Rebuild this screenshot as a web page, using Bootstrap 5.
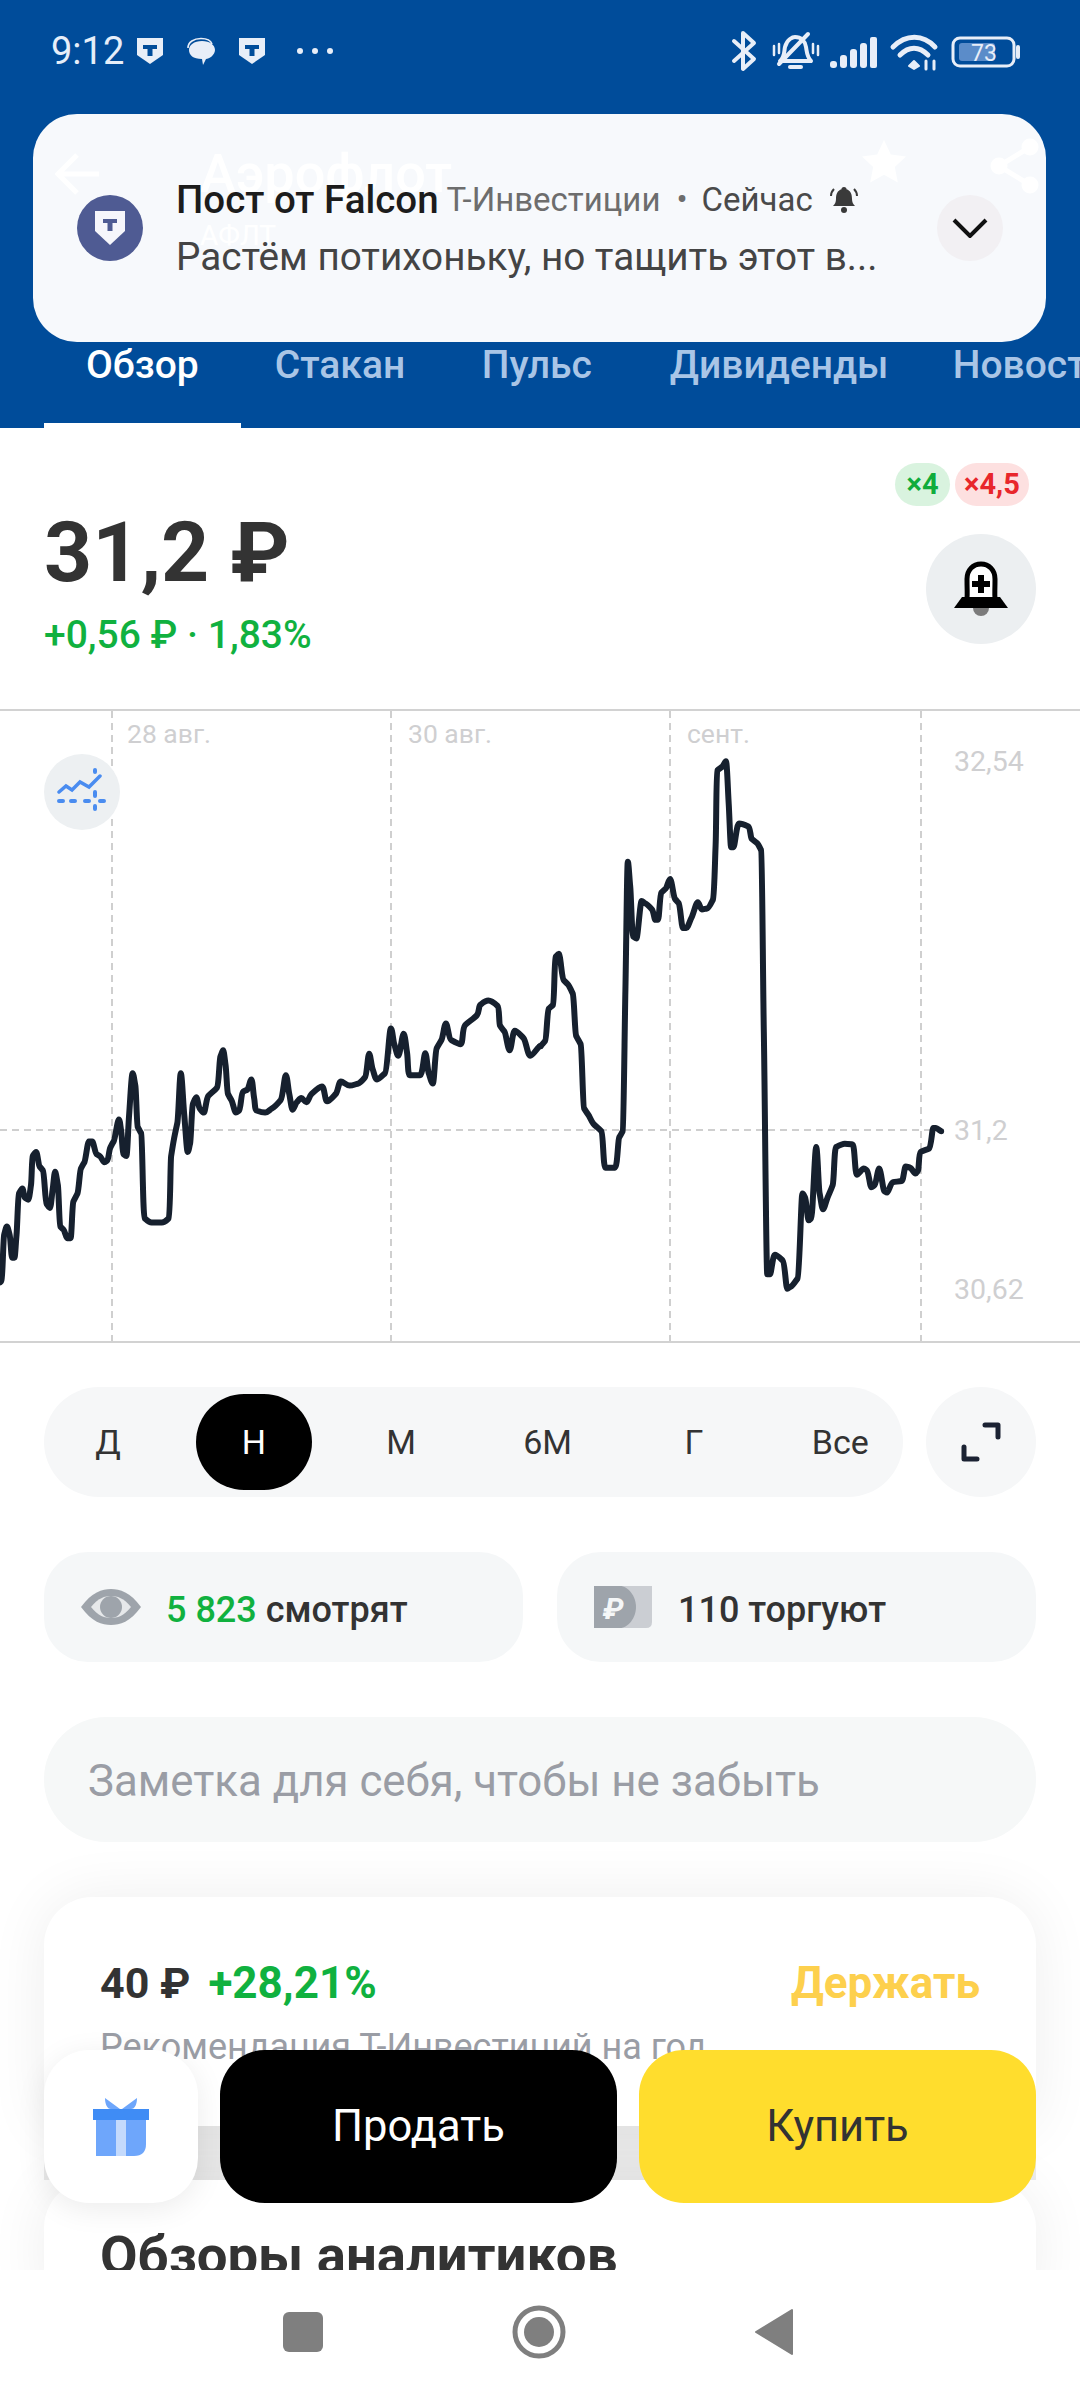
<!DOCTYPE html>
<html lang="ru">
<head>
<meta charset="utf-8">
<title>Аэрофлот</title>
<link href="https://cdn.jsdelivr.net/npm/bootstrap@5.3.0/dist/css/bootstrap.min.css" rel="stylesheet">
<style>
html,body{margin:0;background:#fff}
body{font-family:Roboto,"Liberation Sans",sans-serif;color:#333}
.phone{width:1080px;height:2400px;overflow:hidden}
.topbar{background:#004c9a;height:428px;color:#fff}
.statusline{height:100px;padding:2px 58px 0 51px;color:#e6eef9}
.clock{font-size:38px;line-height:1;margin-right:13px}
.titlerow{height:220px;padding:44px 40px 0 55px}
.backmark{width:46px;margin-right:99px}
.ghosttitle{font-size:54px;font-weight:500;line-height:60px}
.ghostsub{font-size:28px;line-height:36px;margin-top:14px}
.starmark{margin:-6px 82px 0 0}
.sharemark{margin-top:-6px}
.tabrow{height:108px;padding-left:44px;flex-wrap:nowrap;overflow:hidden}
.tabitem{font-size:39px;font-weight:500;line-height:90px;height:108px;padding:0 42px;color:#a9c5e6;white-space:nowrap;border-bottom:5px solid transparent}
.tabitem.on{color:#fff;border-bottom-color:#fff}
.tabitem:nth-child(1){width:198px}
.tabitem:nth-child(2){padding:0 0 0 34px;width:163px}
.tabitem:nth-child(3){padding:0 0 0 78px;width:187px}
.tabitem:nth-child(4){padding:0 0 0 79px;width:295px}
.tabitem:nth-child(5){padding:0 0 0 67px}
.notice{left:33px;top:114px;width:1013px;height:228px;border-radius:44px;background:rgba(255,255,255,.97);padding:0 43px 0 44px;color:#222}
.noticeava{width:66px;height:66px;background:#4f5b93;margin-right:33px;flex:none}
.noticetop{line-height:44px;height:44px;margin-bottom:13px;white-space:nowrap}
.noticename{font-size:38.500px;font-weight:500;color:#1c1c1c}
.noticeapp{font-size:33px;color:#6d6d6d;margin-left:8px}
.noticedot{font-size:33px;color:#6d6d6d;margin:0 14px 0 16px}
.noticetime{font-size:33px;color:#4a4a4a}
.noticebody{font-size:38.700px;line-height:44px;color:#444;white-space:nowrap}
.noticedown{width:66px;height:66px;background:#f2f0f3;flex:none}
.pricezone{height:281px;padding:77px 44px 0}
.priceval{font-size:84px;font-weight:700;line-height:96px;color:#333}
.pricechg{font-size:39px;font-weight:500;line-height:44px;color:#10b13f;margin-top:12px}
.marginchip{font-size:29px;font-weight:700;height:43px;border-radius:22px;line-height:43px;text-align:center}
.chipgreen{width:55px;background:#d9f3df;color:#10ac3c;margin-right:5px}
.chipred{width:74px;background:#fde0e0;color:#e8262b}
.chips{top:35px;right:51px}
.bellbtn{width:110px;height:110px;background:#eceff1;top:106px;right:44px}
.chartzone{height:634px;border-top:2px solid #d2d2d2;border-bottom:2px solid #d2d2d2}
.chartzone svg{display:block}
.axis{font-family:Roboto,"Liberation Sans",sans-serif;font-size:26.500px;fill:#cfcfd1}
.axisval{font-size:28.500px}
.modebtn{left:44px;top:43px;width:76px;height:76px;background:#edf0f2}
.periodrow{margin:44px 44px 0;gap:0}
.periodpill{width:859px;height:110px;background:#f6f7f8;border-radius:55px;padding:0 6px}
.perioditem{width:146.400px;height:96px;line-height:96px;font-size:34px;color:#333;text-align:center;border-radius:48px;flex:none}
.perioditem.first{width:116px}
.perioditem.on{background:#000;color:#fff;width:116px;margin:0 16px 0 30px}
.expandbtn{width:110px;height:110px;background:#f6f7f8;margin-left:auto}
.statrow{margin:55px 44px 0;gap:34px}
.statpill{width:479px;height:110px;background:#f5f7f8;border-radius:44px;font-size:36px;font-weight:500;color:#333}
.statone{padding-left:36px}
.stattwo{padding-left:37px}
.statword{padding-top:6px}
.statgreen{color:#10b13f}
.notefield{margin:55px 44px 0;height:125px;border-radius:62px;background:#f6f8f8;padding:3px 0 0 44px;font-size:43.800px;color:#9a9da5;line-height:122px}
.mainzone{height:1842px}
.lowerzone{height:428px;background:#fff;overflow:hidden}
.softcard{margin:55px 44px 0;border:0;background:#fff;box-shadow:0 0 60px rgba(0,0,0,.07);border-radius:48px}
.softcard.one{height:229px;padding:56px 56px 0;border-radius:48px 48px 0 0}
.softcard.two{margin-top:0;height:140px;padding:40px 56px 0}
.gapband{height:54px;background:#ebebeb;margin:0 44px}
.targetline{line-height:60px}
.targetprice{font-size:43px;font-weight:700;color:#333}
.targetup{font-size:44px;font-weight:700;color:#10b13f;margin-left:18px}
.holdword{font-size:44px;font-weight:700;color:#fdd04d}
.targetnote{font-size:36px;line-height:40px;color:#9a9da5;margin-top:14px;white-space:nowrap}
.reviewhead{font-size:54.500px;font-weight:700;color:#333;line-height:70px;white-space:nowrap}
.actionbar{left:44px;right:44px;top:2050px;height:153px;gap:22px}
.giftbtn{width:154px;flex:none;background:#fff;border:0;border-radius:45px;box-shadow:0 6px 30px rgba(0,0,0,.08);padding:0}
.sellbtn,.buybtn{flex:1 1 0;border:0;border-radius:45px;font-size:43.500px}
.sellbtn,.sellbtn:hover{background:#000;color:#fff}
.buybtn,.buybtn:hover{background:#ffdd2d;color:#333}
.sysnav{height:130px;background:#fff;position:relative}
</style>
</head>
<body>
<div class="phone position-relative d-flex flex-column">
  <div class="mainzone flex-shrink-0">
    <header class="topbar position-relative">
      <div class="statusline d-flex align-items-center">
        <span class="clock">9:12</span>
        <svg width="26" height="26" viewBox="0 0 26 26" class="me-4"><path d="M0 0H26V17L13 26L0 17Z" fill="#e8eef8"/><rect x="6" y="7" width="14" height="4" fill="#004c9a"/><rect x="10.5" y="7" width="5" height="11" fill="#004c9a"/></svg>
        <svg width="28" height="28" viewBox="0 0 28 28" class="me-4"><path d="M1 11C1 5 7 1.5 14 1.5S24 4 25 7" fill="none" stroke="#e8eef8" stroke-width="1.6"/><path d="M2 13C2 8 7 4 15 4s13 4 13 9-6 9-9 9l-3 6-1-6C6 22 2 18 2 13Z" fill="#e8eef8"/></svg>
        <svg width="26" height="26" viewBox="0 0 26 26"><path d="M0 0H26V17L13 26L0 17Z" fill="#e8eef8"/><rect x="6" y="7" width="14" height="4" fill="#004c9a"/><rect x="10.5" y="7" width="5" height="11" fill="#004c9a"/></svg>
        <svg width="36" height="8" viewBox="0 0 36 8" style="margin-left:32px"><circle cx="3" cy="4" r="3" fill="#e8eef8"/><circle cx="18" cy="4" r="3" fill="#e8eef8"/><circle cx="33" cy="4" r="3" fill="#e8eef8"/></svg>
        <svg class="ms-auto" width="292" height="44" viewBox="732 28 292 44" fill="none" stroke="#e8eef8" stroke-linecap="round" stroke-linejoin="round">
          <path d="M736 40L756 58L745 68V32L756 42L736 60" stroke-width="4"/>
          <path d="M782 60C787 56 786 50 787 46C789 38 795 36 797 36C803 36 807 40 808 46C809 52 809 56 813 60H782Z" stroke-width="4"/><path d="M781 63L810 33" stroke-width="4"/><path d="M792 66H803" stroke-width="4"/><path d="M776 45V54M781 43V52M815 43V52M820 45V54" stroke-width="2.5"/>
          <g fill="#e8eef8" stroke="none"><rect x="832" y="60" width="7" height="7" rx="3"/><rect x="842" y="54" width="7" height="13" rx="3"/><rect x="852" y="48" width="7" height="19" rx="3"/><rect x="862" y="42" width="7" height="25" rx="3"/><rect x="872" y="36" width="7" height="31" rx="2"/></g>
          <path d="M895 46C908 33 925 33 937 46" stroke-width="5"/><path d="M902 54C911 45 921 45 930 54" stroke-width="5"/><path d="M911 65L916 60L921 65L916 68Z" fill="#e8eef8" stroke-width="2"/><path d="M928 60V68M936 60V68" stroke-width="3"/>
          <rect x="955" y="37" width="61" height="28" rx="7" stroke-width="3"/><rect x="961" y="42" width="36" height="18" rx="3" fill="#5b8cc9" stroke="none"/><path d="M1020 46V56" stroke-width="4"/>
          <text x="973" y="60" font-family="Roboto,sans-serif" font-size="23" fill="#e8eef8" stroke="none">73</text>
        </svg>
      </div>
      <div class="titlerow d-flex align-items-start">
        <svg class="backmark mt-2" width="46" height="44" viewBox="0 0 46 44" fill="none" stroke="#fff" stroke-width="5"><path d="M44 22H4M22 3L3 22L22 41"/></svg>
        <div class="flex-grow-1">
          <div class="ghosttitle">Аэрофлот</div>
          <div class="ghostsub">АФЛТ</div>
        </div>
        <svg class="starmark" width="48" height="48" viewBox="0 0 24 24" fill="#fff"><path d="M12 1l3.400 7.300 7.600.9-5.600 5.300 1.500 7.800L12 18.400 5.100 22.300l1.500-7.800L1 9.200l7.600-.9z"/></svg>
        <svg class="sharemark" width="50" height="56" viewBox="0 0 50 56" fill="#fff" stroke="#fff" stroke-width="5"><circle cx="40" cy="9" r="6"/><circle cx="9" cy="28" r="6"/><circle cx="40" cy="47" r="6"/><path d="M40 9L9 28L40 47" fill="none"/></svg>
      </div>
      <ul class="nav tabrow list-unstyled m-0">
        <li class="tabitem on">Обзор</li>
        <li class="tabitem">Стакан</li>
        <li class="tabitem">Пульс</li>
        <li class="tabitem">Дивиденды</li>
        <li class="tabitem">Новости</li>
      </ul>
      <div class="notice position-absolute d-flex align-items-center">
        <div class="noticeava rounded-circle d-flex align-items-center justify-content-center">
          <svg width="32" height="36" viewBox="0 0 32 36"><path d="M1 1H31V21L16 35L1 21Z" fill="#f6f6fb"/><rect x="9" y="9" width="14" height="4" fill="#4f5b93"/><rect x="13.500" y="9" width="5" height="12" fill="#4f5b93"/></svg>
        </div>
        <div class="flex-grow-1">
          <div class="noticetop d-flex align-items-center">
            <span class="noticename">Пост от Falcon</span><span class="noticeapp">Т-Инвестиции</span><span class="noticedot">•</span><span class="noticetime">Сейчас</span>
            <svg class="ms-3" width="30" height="28" viewBox="0 0 30 28" fill="#3a3a3a"><path d="M15 1c1.800 0 2.500 1 2.500 2.200C21.500 4.500 23 8 23 13c0 3 1 5 3 7H4c2-2 3-4 3-7 0-5 1.500-8.500 5.500-9.800C12.500 2 13.200 1 15 1Z"/><circle cx="15" cy="24" r="3"/><path d="M5 3C3 5 2 7 2 10M25 3c2 2 3 4 3 7" fill="none" stroke="#3a3a3a" stroke-width="2"/></svg>
          </div>
          <div class="noticebody">Растём потихоньку, но тащить этот в...</div>
        </div>
        <div class="noticedown rounded-circle d-flex align-items-center justify-content-center">
          <svg width="36" height="20" viewBox="0 0 36 20" fill="none" stroke="#111" stroke-width="4"><path d="M2 2L18 18L34 2"/></svg>
        </div>
      </div>
    </header>

    <section class="pricezone position-relative">
      <div class="priceval">31,2 ₽</div>
      <div class="pricechg">+0,56 ₽ · 1,83%</div>
      <div class="chips position-absolute d-flex">
        <span class="marginchip chipgreen">×4</span>
        <span class="marginchip chipred">×4,5</span>
      </div>
      <div class="bellbtn position-absolute rounded-circle d-flex align-items-center justify-content-center">
        <svg width="56" height="56" viewBox="0 0 56 56"><circle cx="28" cy="47" r="8" fill="#7b7b7b"/><path d="M13 42C15 38 14 34 14 18C14 9 20 3 28 3S42 9 42 18C42 34 41 38 43 42Z" fill="#fff" stroke="#000" stroke-width="5" stroke-linejoin="round"/><path d="M1 47L9 36H47L55 47Z" fill="#000"/><path d="M28 14V32M19 23H37" stroke="#000" stroke-width="6"/></svg>
      </div>
    </section>

    <section class="chartzone position-relative">
      <svg width="1080" height="630" viewBox="0 711 1080 630">
        <g stroke="#cfcfcf" stroke-width="2" stroke-dasharray="7 5" fill="none">
          <path d="M112 711V1341M391 711V1341M670 711V1341M921 711V1341"/>
          <path d="M0 1130H945"/>
        </g>
        <text class="axis" x="127" y="743">28 авг.</text>
        <text class="axis" x="408" y="743">30 авг.</text>
        <text class="axis" x="687" y="743">сент.</text>
        <text class="axis axisval" x="954" y="771">32,54</text>
        <text class="axis axisval" x="954" y="1140">31,2</text>
        <text class="axis axisval" x="954" y="1299">30,62</text>
        <g fill="none" stroke="#16202e" stroke-width="6" stroke-linejoin="round" stroke-linecap="round">
          <path class="pricetrace" vector-effect="non-scaling-stroke" transform="translate(0,700) scale(.34435,.41463)" data-pts="0,1405 5,1400 12,1290 20,1270 28,1290 35,1345 42,1345 48,1290 55,1190 65,1178 72,1200 82,1205 90,1170 95,1100 105,1090 115,1125 125,1135 135,1215 145,1225 153,1180 160,1138 168,1170 175,1270 185,1278 195,1298 205,1298 213,1210 225,1190 235,1130 245,1115 258,1065 268,1065 280,1095 290,1100 303,1115 312,1110 320,1080 330,1065 345,1012 352,1040 358,1095 367,1100 375,1000 385,900 393,930 400,1030 410,1045 420,1250 440,1260 470,1260 490,1250 497,1100 505,1060 515,1020 525,900 535,1000 545,1090 552,1070 560,975 570,958 580,985 592,995 605,955 630,935 640,860 648,845 655,880 662,950 672,965 685,995 695,990 705,945 718,940 730,915 738,960 745,990 770,995 790,985 815,965 830,905 840,950 850,988 862,970 875,960 890,970 905,950 935,932 950,968 975,950 990,920 1015,930 1040,925 1060,910 1072,853 1082,890 1095,915 1118,900 1135,792 1145,830 1157,858 1172,805 1182,850 1190,905 1220,905 1235,852 1245,900 1257,925 1268,840 1282,820 1295,780 1310,820 1338,830 1350,785 1385,760 1395,735 1418,725 1445,738 1452,785 1465,800 1480,845 1495,798 1520,815 1540,858 1568,835 1568,835"/>
          <path class="pricetrace" vector-effect="non-scaling-stroke" transform="translate(540,700) scale(.34435,.41463)" data-pts="0,835 15,822 25,745 38,735 45,620 55,612 68,675 80,685 95,708 105,810 118,830 128,985 140,1000 155,1022 178,1040 190,1128 218,1128 230,1055 240,1040 248,700 255,390 262,450 270,570 280,575 295,485 305,490 325,505 335,530 343,530 352,465 365,455 378,432 392,480 403,490 415,550 425,550 440,525 458,488 470,505 485,503 502,482 510,350 515,170 530,160 540,148 548,250 555,355 562,355 578,298 605,305 615,335 630,345 642,362 650,800 660,1385 668,1385 682,1338 705,1352 718,1420 728,1415 748,1395 762,1190 770,1200 780,1255 788,1250 802,1078 812,1190 822,1228 835,1200 850,1170 860,1078 885,1070 908,1072 920,1145 940,1130 950,1135 962,1175 972,1170 985,1130 1000,1185 1008,1188 1025,1163 1050,1160 1062,1125 1075,1128 1090,1142 1098,1135 1105,1090 1130,1082 1142,1032 1150,1032 1165,1040"/>
        </g>
      </svg>
      <div class="modebtn position-absolute rounded-circle d-flex align-items-center justify-content-center">
        <svg width="50" height="50" viewBox="0 0 50 50" fill="none" stroke="#4a8cf0" stroke-width="3.500" stroke-linecap="round"><path d="M2 25L9 19L15 23L23 15L32 20L43 9"/><path d="M2 34H6M14 34H18M28 34H32M43 34H47M38 3V5M38 25V29M38 39V42" stroke-width="4"/></svg>
      </div>
    </section>

    <div class="periodrow d-flex align-items-center">
      <div class="periodpill d-flex align-items-center">
        <span class="perioditem first">Д</span>
        <span class="perioditem on">Н</span>
        <span class="perioditem">М</span>
        <span class="perioditem">6М</span>
        <span class="perioditem">Г</span>
        <span class="perioditem">Все</span>
      </div>
      <div class="expandbtn rounded-circle d-flex align-items-center justify-content-center">
        <svg width="40" height="40" viewBox="0 0 40 40" fill="none" stroke="#1b2233" stroke-width="5" stroke-linecap="round" stroke-linejoin="round"><path d="M24 3H37V15M3 25V37H16"/></svg>
      </div>
    </div>

    <div class="statrow d-flex">
      <div class="statpill statone d-flex align-items-center">
        <svg class="me-4" width="62" height="38" viewBox="0 0 62 38"><path d="M1 19C12 4 22 1 31 1s19 3 30 18C50 34 40 37 31 37S12 34 1 19Z" fill="#9ea4ab"/><path d="M11 19C18 10 25 8 31 8s13 2 20 11C44 28 37 30 31 30S18 28 11 19Z" fill="#e6e8ea"/><circle cx="31" cy="19" r="11" fill="#9ea4ab"/></svg>
        <span class="statword"><span class="statgreen">5 823</span> смотрят</span>
      </div>
      <div class="statpill stattwo d-flex align-items-center">
        <svg class="me-4" width="60" height="42" viewBox="0 0 60 42"><path d="M0 0H58V36Q58 42 52 42H0Z" fill="#cbced3"/><path d="M0 0H26C34 0 42 10 42 21S34 42 26 42H0Z" fill="#9ea4ab"/><text x="9" y="33" font-family="Roboto,sans-serif" font-size="30" font-weight="700" font-style="italic" fill="#f5f7f8">₽</text></svg>
        <span class="statword">110 торгуют</span>
      </div>
    </div>

    <div class="notefield">Заметка для себя, чтобы не забыть</div>
  </div>

  <div class="lowerzone flex-grow-1">
    <div class="card softcard one">
      <div class="targetline d-flex align-items-center">
        <span class="targetprice">40 ₽</span><span class="targetup">+28,21%</span>
        <span class="holdword ms-auto">Держать</span>
      </div>
      <div class="targetnote">Рекомендация Т-Инвестиций на год</div>
    </div>
    <div class="gapband"></div>
    <div class="card softcard two">
      <div class="reviewhead">Обзоры аналитиков</div>
    </div>
  </div>

  <div class="actionbar position-absolute d-flex">
    <button class="btn giftbtn" type="button" aria-label="Подарок">
      <svg width="56" height="58" viewBox="0 0 56 58"><path d="M12 0L27 11H18C14 11 12 6 12 0ZM44 0L29 11H38C42 11 44 6 44 0Z" fill="#6ea6fb"/><path d="M3 21H53V46Q53 58 41 58H3Z" fill="#6ea6fb"/><rect x="0" y="11" width="56" height="11" fill="#3f8cf5"/><rect x="23" y="22" width="10" height="36" fill="#c4dafc"/></svg>
    </button>
    <button class="btn sellbtn" type="button">Продать</button>
    <button class="btn buybtn" type="button">Купить</button>
  </div>

  <nav class="sysnav flex-shrink-0">
    <svg width="1080" height="130" viewBox="0 2270 1080 130" class="d-block">
      <rect x="283" y="2312" width="40" height="40" rx="6" fill="#7f7f7f"/>
      <circle cx="539" cy="2332" r="24" fill="none" stroke="#7f7f7f" stroke-width="5"/>
      <circle cx="539" cy="2332" r="15" fill="#7f7f7f"/>
      <path d="M792 2310V2354L756 2332Z" fill="#7f7f7f" stroke="#7f7f7f" stroke-width="2" stroke-linejoin="round"/>
    </svg>
  </nav>
</div>
<script src="https://cdn.jsdelivr.net/npm/bootstrap@5.3.0/dist/js/bootstrap.bundle.min.js"></script>
<script>
document.querySelectorAll('.pricetrace').forEach(function(el){
  var p=el.getAttribute('data-pts').trim().split(/\s+/).map(function(s){return s.split(',').map(Number)});
  function slope(i){
    var a=p[Math.max(i-1,0)],b=p[i],c=p[Math.min(i+1,p.length-1)];
    var u=b[1]-a[1],v=c[1]-b[1];
    if(u*v<=0)return 0;
    var m=(c[1]-a[1])/6,lim=Math.min(Math.abs(u),Math.abs(v))/3;
    return Math.max(-lim,Math.min(lim,m));
  }
  var d='M'+p[0][0]+' '+p[0][1];
  for(var i=0;i<p.length-1;i++){
    var a=p[Math.max(i-1,0)],b=p[i],c=p[i+1],e=p[Math.min(i+2,p.length-1)];
    d+='C'+(b[0]+(c[0]-a[0])/6)+' '+(b[1]+slope(i))+' '+(c[0]-(e[0]-b[0])/6)+' '+(c[1]-slope(i+1))+' '+c[0]+' '+c[1];
  }
  el.setAttribute('d',d);
});
</script>
</body>
</html>
